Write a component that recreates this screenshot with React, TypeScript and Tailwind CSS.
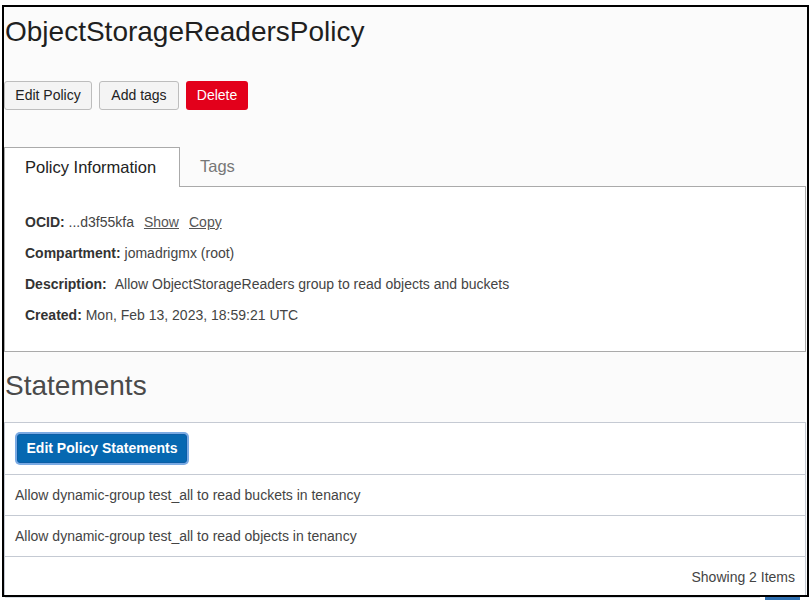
import React from "react";

export default function App() {
  const rows = [
    "Allow dynamic-group test_all to read buckets in tenancy",
    "Allow dynamic-group test_all to read objects in tenancy",
  ];
  return (
    <div className="w-[810px] h-[600px] bg-white overflow-hidden font-['Liberation_Sans',Arial,sans-serif]">
      <div className="ml-[2px] mt-[5px] w-[807px] h-[592px] border-2 border-black bg-[#fbfbfb] overflow-hidden flex flex-col">
        <h1 className="mt-[9px] pl-[1px] text-[28px] leading-[32px] text-[#1f1f1f]">
          ObjectStorageReadersPolicy
        </h1>
        <div className="mt-[33px] flex gap-[7px]">
          <button className="w-[88px] h-[29px] border border-[#bdbdbd] bg-[#f4f4f4] rounded-[3px] text-[14px] text-[#222]">
            Edit Policy
          </button>
          <button className="w-[80px] h-[29px] border border-[#bdbdbd] bg-[#f4f4f4] rounded-[3px] text-[14px] text-[#222]">
            Add tags
          </button>
          <button className="w-[62px] h-[29px] bg-[#e3001b] rounded-[3px] text-[14px] text-white">
            Delete
          </button>
        </div>
        <div className="mt-[36px] flex items-end">
          <div className="relative z-10 -mb-px w-[176px] h-[40px] border-l border-t border-r border-[#aaaaaa] bg-white flex items-center pl-[20px] text-[16.5px] text-[#222]">
            Policy Information
          </div>
          <div className="h-[40px] flex items-center pl-[20px] text-[16.5px] text-[#777]">Tags</div>
        </div>
        <div className="w-[802px] border border-[#aaaaaa] bg-white px-[20px] pt-[25px] pb-[26px] flex flex-col gap-[11px] text-[14px] leading-[20px] text-[#444]">
          <div>
            <span className="font-bold text-[#333]">OCID:</span> ...d3f55kfa
            <span className="ml-[10px] underline text-[#555]">Show</span>
            <span className="ml-[10px] underline text-[#555]">Copy</span>
          </div>
          <div>
            <span className="font-bold text-[#333]">Compartment:</span> jomadrigmx (root)
          </div>
          <div>
            <span className="font-bold text-[#333]">Description:</span>
            <span className="ml-[8px]">Allow ObjectStorageReaders group to read objects and buckets</span>
          </div>
          <div>
            <span className="font-bold text-[#333]">Created:</span> Mon, Feb 13, 2023, 18:59:21 UTC
          </div>
        </div>
        <h2 className="mt-[18px] pl-[1px] text-[28px] leading-[32px] text-[#4a4a4a]">Statements</h2>
        <div className="mt-[20px] w-[802px] border border-[#c5cad3] bg-white flex flex-col text-[14px] text-[#444]">
          <div className="h-[52px] border-b border-[#c5cad3] pl-[12px] pt-[11px]">
            <button className="w-[170px] h-[29px] rounded-[3px] border border-[#0b5ea6] bg-[#0668b1] shadow-[0_0_0_2px_#7aaae3] text-[14px] font-bold text-white">
              Edit Policy Statements
            </button>
          </div>
          {rows.map((r) => (
            <div key={r} className="h-[41px] border-b border-[#c5cad3] flex items-center pl-[10px]">
              {r}
            </div>
          ))}
          <div className="h-[41px] flex items-center justify-end pr-[10px]">Showing 2 Items</div>
        </div>
      </div>
      <div className="flex">
        <div className="ml-[5px] w-[755px] h-[1px] bg-[#d8dde3]" />
        <div className="ml-[5px] w-[35px] h-[3px] bg-[#2f6fb0]" />
      </div>
    </div>
  );
}
